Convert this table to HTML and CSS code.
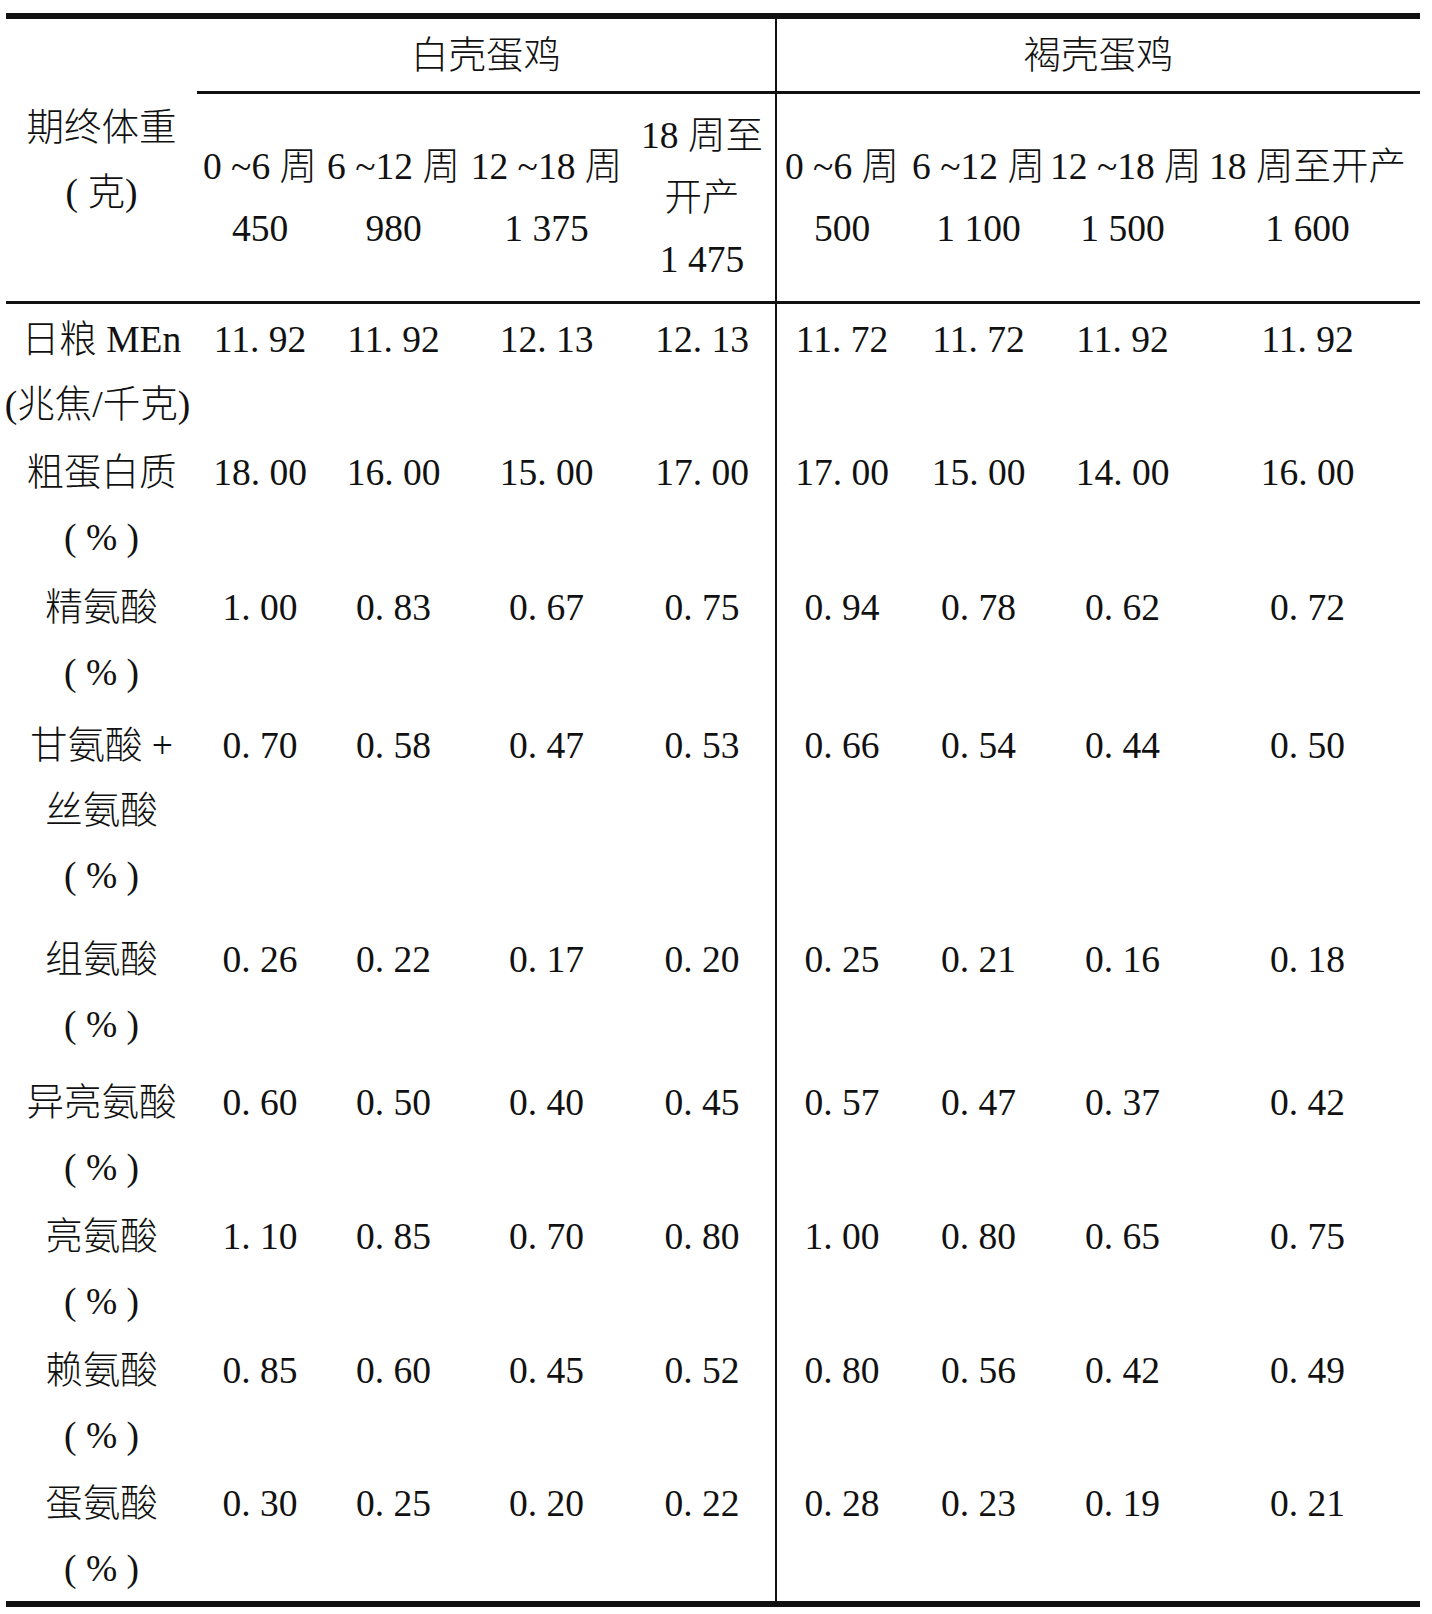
FILE: index.html
```html
<!DOCTYPE html>
<html lang="zh-CN">
<head>
<meta charset="utf-8">
<title>蛋鸡营养需要</title>
<link rel="stylesheet" href="styles.css">
</head>
<body>
<table class="nutri">
  <colgroup>
    <col class="c0"><col class="c1"><col class="c2"><col class="c3"><col class="c4">
    <col class="c5"><col class="c6"><col class="c7"><col class="c8">
  </colgroup>
  <thead>
    <tr class="group-row">
      <th class="label head-label" rowspan="2">期终体重<br>( 克)</th>
      <th class="group" colspan="4">白壳蛋鸡</th>
      <th class="group split" colspan="4">褐壳蛋鸡</th>
    </tr>
    <tr class="sub-row">
      <th class="sub">0 ~6 周<br>450</th>
      <th class="sub">6 ~12 周<br>980</th>
      <th class="sub">12 ~18 周<br>1 375</th>
      <th class="sub">18 周至<br>开产<br>1 475</th>
      <th class="sub split">0 ~6 周<br>500</th>
      <th class="sub">6 ~12 周<br>1 100</th>
      <th class="sub">12 ~18 周<br>1 500</th>
      <th class="sub">18 周至开产<br>1 600</th>
    </tr>
  </thead>
  <tbody>
    <tr class="row-1">
      <td class="label">日粮 MEn<br><span class="wide">(兆焦/千克)</span></td>
      <td>11. 92</td><td>11. 92</td><td>12. 13</td><td>12. 13</td>
      <td class="split">11. 72</td><td>11. 72</td><td>11. 92</td><td>11. 92</td>
    </tr>
    <tr class="row-2">
      <td class="label">粗蛋白质<br>( % )</td>
      <td>18. 00</td><td>16. 00</td><td>15. 00</td><td>17. 00</td>
      <td class="split">17. 00</td><td>15. 00</td><td>14. 00</td><td>16. 00</td>
    </tr>
    <tr class="row-3">
      <td class="label">精氨酸<br>( % )</td>
      <td>1. 00</td><td>0. 83</td><td>0. 67</td><td>0. 75</td>
      <td class="split">0. 94</td><td>0. 78</td><td>0. 62</td><td>0. 72</td>
    </tr>
    <tr class="row-4">
      <td class="label">甘氨酸 +<br>丝氨酸<br>( % )</td>
      <td>0. 70</td><td>0. 58</td><td>0. 47</td><td>0. 53</td>
      <td class="split">0. 66</td><td>0. 54</td><td>0. 44</td><td>0. 50</td>
    </tr>
    <tr class="row-5">
      <td class="label">组氨酸<br>( % )</td>
      <td>0. 26</td><td>0. 22</td><td>0. 17</td><td>0. 20</td>
      <td class="split">0. 25</td><td>0. 21</td><td>0. 16</td><td>0. 18</td>
    </tr>
    <tr class="row-6">
      <td class="label">异亮氨酸<br>( % )</td>
      <td>0. 60</td><td>0. 50</td><td>0. 40</td><td>0. 45</td>
      <td class="split">0. 57</td><td>0. 47</td><td>0. 37</td><td>0. 42</td>
    </tr>
    <tr class="row-7">
      <td class="label">亮氨酸<br>( % )</td>
      <td>1. 10</td><td>0. 85</td><td>0. 70</td><td>0. 80</td>
      <td class="split">1. 00</td><td>0. 80</td><td>0. 65</td><td>0. 75</td>
    </tr>
    <tr class="row-8">
      <td class="label">赖氨酸<br>( % )</td>
      <td>0. 85</td><td>0. 60</td><td>0. 45</td><td>0. 52</td>
      <td class="split">0. 80</td><td>0. 56</td><td>0. 42</td><td>0. 49</td>
    </tr>
    <tr class="row-last">
      <td class="label">蛋氨酸<br>( % )</td>
      <td>0. 30</td><td>0. 25</td><td>0. 20</td><td>0. 22</td>
      <td class="split">0. 28</td><td>0. 23</td><td>0. 19</td><td>0. 21</td>
    </tr>
  </tbody>
</table>
</body>
</html>
```

FILE: styles.css
```css
html, body {
  margin: 0;
  padding: 0;
  background: #ffffff;
}

body {
  font-family: "Liberation Serif", "Noto Sans CJK SC", serif;
  font-weight: 300;
  color: #111111;
}

.nutri {
  margin: 13px 0 0 6px;
  width: 1414px;
  table-layout: fixed;
  border-collapse: separate;
  border-spacing: 0;
  border-top: 6px solid #111111;
  font-size: 37.5px;
  line-height: 65px;
}

.c0 { width: 191px; }
.c1 { width: 126px; }
.c2 { width: 141px; }
.c3 { width: 165px; }
.c4 { width: 146px; }
.c5 { width: 132px; }
.c6 { width: 143px; }
.c7 { width: 145px; }
.c8 { width: 225px; }

.nutri th,
.nutri td {
  padding: 0;
  text-align: center;
  white-space: nowrap;
  font-weight: 300;
}

.nutri td {
  vertical-align: top;
  padding-top: 3px;
}

.head-label {
  vertical-align: middle;
  padding-top: 8px;
  border-bottom: 3px solid #111111;
}

.group-row {
  height: 75px;
}

.group {
  vertical-align: middle;
  padding-top: 3px;
  border-bottom: 3px solid #111111;
}

.sub-row {
  height: 210px;
}

.sub {
  vertical-align: middle;
  line-height: 62px;
  border-bottom: 3px solid #111111;
}

.split {
  border-left: 2px solid #111111;
}

.wide {
  display: inline-block;
  margin-left: -8px;
}

.row-1 { height: 133px; }
.row-2 { height: 135px; }
.row-3 { height: 138px; }
.row-4 { height: 214px; }
.row-5 { height: 143px; }
.row-6 { height: 134px; }
.row-7 { height: 134px; }
.row-8 { height: 133px; }
.row-last { height: 132px; }

.row-last td {
  border-bottom: 6px solid #111111;
}
```
